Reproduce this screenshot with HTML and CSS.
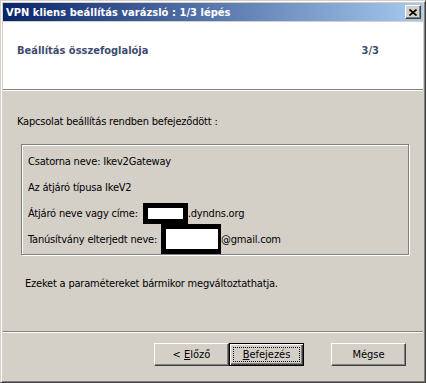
FILE: index.html
```html
<!DOCTYPE html>
<html lang="hu">
<head>
<meta charset="utf-8">
<title>VPN kliens beállítás varázsló</title>
<link rel="stylesheet" href="styles.css">
</head>
<body>
<div class="window">
  <div class="titlebar">
    <span class="title-text">VPN kliens beállítás varázsló : 1/3 lépés</span>
    <button class="close-btn" aria-label="Bezárás">
      <svg width="8" height="7" viewBox="0 0 8 7"><path d="M0.5 0.5L7.5 6.5M7.5 0.5L0.5 6.5" stroke="#000" stroke-width="1.6" fill="none"/></svg>
    </button>
  </div>
  <div class="header">
    <span class="header-title">Beállítás összefoglalója</span>
    <span class="header-step">3/3</span>
  </div>
  <div class="sep"></div>
  <div class="content">
    <p class="intro">Kapcsolat beállítás rendben befejeződött :</p>
    <div class="group">
      <div class="row">Csatorna neve: Ikev2Gateway</div>
      <div class="row">Az átjáró típusa IkeV2</div>
      <div class="row">Átjáró neve vagy címe:<span class="redact r1"></span>.dyndns.org</div>
      <div class="row">Tanúsítvány elterjedt neve:<span class="redact r2"></span>@gmail.com</div>
    </div>
    <p class="note">Ezeket a paramétereket bármikor megváltoztathatja.</p>
  </div>
  <div class="footer">
    <div class="sep"></div>
    <div class="buttons">
      <button class="btn"><span class="btn-label">&lt; <u>E</u>lőző</span></button>
      <button class="btn btn-default"><span class="btn-label focus"><u>B</u>efejezés</span></button>
      <button class="btn btn-cancel"><span class="btn-label">Mégse</span></button>
    </div>
  </div>
</div>
</body>
</html>
```
FILE: styles.css
```css
html, body {
  margin: 0;
  padding: 0;
  background: #d4d0c8;
}
body {
  font-family: "DejaVu Sans Condensed", "DejaVu Sans", sans-serif;
  font-size: 11px;
  letter-spacing: -0.2px;
  color: #000;
}
.window {
  box-sizing: border-box;
  width: 426px;
  height: 383px;
  display: flex;
  flex-direction: column;
  background: #d4d0c8;
  border: 1px solid;
  border-color: #d4d0c8 #404040 #404040 #d4d0c8;
  box-shadow: inset 1px 1px 0 #ffffff, inset -1px -1px 0 #808080;
  padding: 2px;
  overflow: hidden;
}
.titlebar {
  height: 18px;
  flex: none;
  display: flex;
  align-items: center;
  justify-content: space-between;
  background: linear-gradient(to right, #0a246a, #a6caf0);
  margin-bottom: 1px;
}
.title-text {
  color: #fff;
  font-weight: bold;
  letter-spacing: 0.05px;
  padding-left: 3px;
  line-height: 13px;
}
.close-btn {
  box-sizing: border-box;
  width: 16px;
  height: 14px;
  margin: 0 2px 0 0;
  padding: 0;
  display: flex;
  align-items: center;
  justify-content: center;
  background: #d4d0c8;
  border: 1px solid;
  border-color: #ffffff #404040 #404040 #ffffff;
  box-shadow: inset -1px -1px 0 #808080;
}
.close-btn svg { display: block; margin-left: -1px; }
.header {
  flex: none;
  height: 67px;
  box-sizing: border-box;
  background: #fff;
  display: flex;
  justify-content: space-between;
  align-items: flex-start;
  padding: 22px 44px 0 14px;
  font-weight: bold;
  letter-spacing: 0;
  color: #3d4c70;
  line-height: 13px;
}
.sep {
  flex: none;
  height: 1px;
  background: #808080;
  border-bottom: 1px solid #ffffff;
}
.content {
  flex: 1;
  padding: 24px 0 0 14px;
}
.intro {
  margin: 0;
  line-height: 14px;
}
.group {
  box-sizing: border-box;
  width: 388px;
  height: 111px;
  margin: 15px 0 0 4px;
  border: 1px solid #808080;
  box-shadow: inset 1px 1px 0 #ffffff, 1px 1px 0 #ffffff;
  padding: 3px 0 0 6px;
  display: flex;
  flex-direction: column;
}
.row {
  height: 26px;
  display: flex;
  align-items: center;
  white-space: nowrap;
}
.redact {
  box-sizing: border-box;
  flex: none;
  background: #fff;
  border: 5px solid #000;
}
.r1 {
  width: 45px;
  height: 21px;
  margin-left: 5px;
}
.r2 {
  width: 60px;
  height: 30px;
  margin-left: 4px;
  border-right-width: 3px;
}
.note {
  margin: 22px 0 0 8px;
  line-height: 14px;
}
.footer {
  flex: none;
}
.buttons {
  display: flex;
  justify-content: flex-end;
  padding: 10px 17px 14px 0;
}
.btn {
  box-sizing: border-box;
  width: 75px;
  height: 23px;
  margin: 0;
  padding: 0;
  font: inherit;
  color: #000;
  background: #d4d0c8;
  border: 1px solid;
  border-color: #ffffff #404040 #404040 #ffffff;
  box-shadow: inset -1px -1px 0 #808080;
  display: flex;
  align-items: center;
  justify-content: center;
}
.btn-default {
  border: 1px solid #000;
  box-shadow: inset 1px 1px 0 #ffffff, inset -1px -1px 0 #404040, inset -2px -2px 0 #808080;
  padding: 3px;
}
.focus {
  flex: 1;
  align-self: stretch;
  display: flex;
  align-items: center;
  justify-content: center;
  outline: 1px dotted #000;
  outline-offset: -1px;
}
.btn-cancel {
  margin-left: 27px;
}
.btn-label u {
  text-decoration: underline;
  text-underline-offset: 1px;
}
```
